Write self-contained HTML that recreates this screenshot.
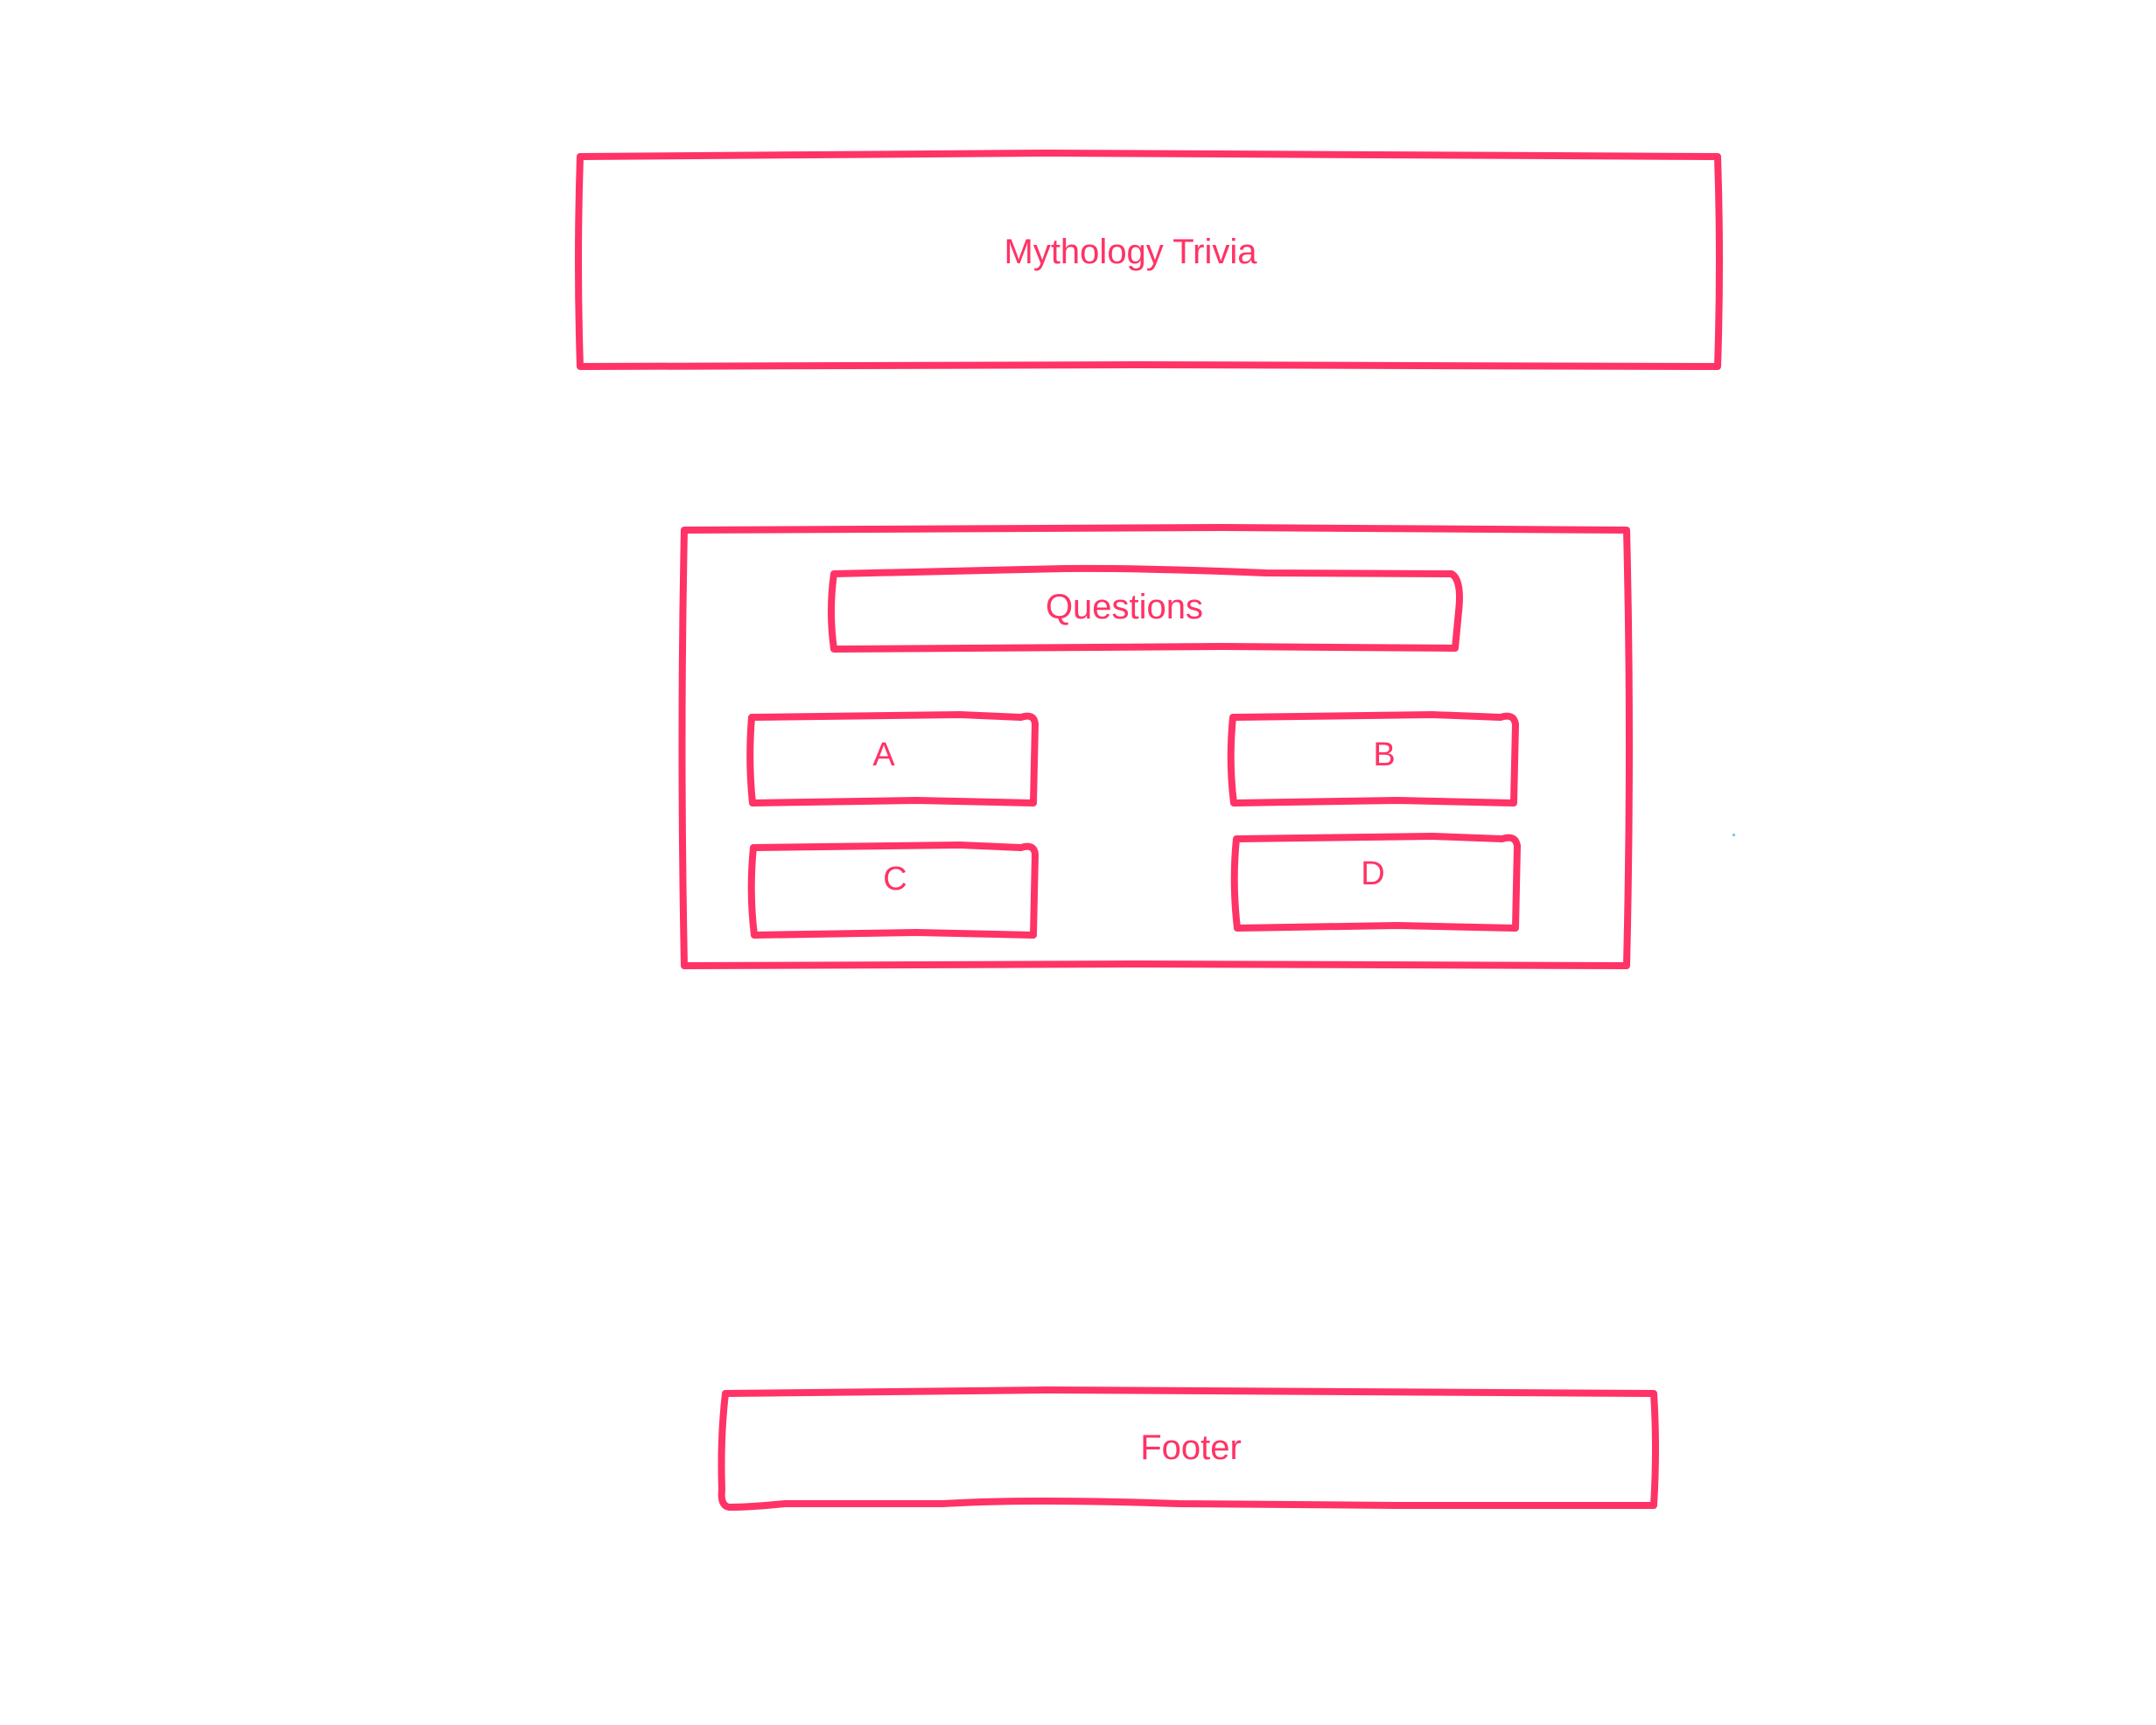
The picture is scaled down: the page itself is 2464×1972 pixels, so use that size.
<!DOCTYPE html>
<html><head><meta charset="utf-8"><style>
html,body{margin:0;padding:0;background:#fff;}
svg{display:block}
text{font-family:"Liberation Sans",sans-serif;fill:#ff3366;text-anchor:middle;}
</style></head><body>
<svg width="2464" height="1972" viewBox="0 0 2464 1972" xmlns="http://www.w3.org/2000/svg">
<g fill="none" stroke="#ff3366" stroke-width="8" stroke-linecap="round" stroke-linejoin="round" transform="translate(-3,-1)">
<path d="M666 180 L1200 176 L1966 180 Q1970 300 1966 420 L1300 418 L666 420 Q662 300 666 180 Z"/>
<path d="M785 607 L1400 604 L1862 607 Q1868 850 1862 1105 L1300 1103 L785 1105 Q780 850 785 607 Z"/>
<path d="M956 657 L1220 651 Q1300 650 1450 656 L1662 657 Q1674 664 1670 700 L1666 742 L1400 740 L956 743 Q950 700 956 657 Z"/>
<path d="M862 821 L1100 818 L1170 821 Q1185 816 1186 829 L1184 919 L1050 916 L863 919 Q858 871 862 821 Z"/>
<path d="M1412 821 L1640 818 L1718 821 Q1733 816 1735 829 L1733 919 L1600 916 L1413 919 Q1407 871 1412 821 Z"/>
<path d="M864 970 L1100 967 L1170 970 Q1185 965 1186 978 L1184 1070 L1050 1067 L865 1070 Q859 1020 864 970 Z"/>
<path d="M1416 960 L1640 957 L1720 960 Q1735 955 1737 968 L1735 1062 L1600 1059 L1417 1062 Q1411 1010 1416 960 Z"/>
<path d="M832 1594 L1200 1590 L1893 1594 Q1897 1656 1893 1722 L1600 1722 L1350 1720 Q1180 1714 1080 1720 L900 1720 Q860 1724 836 1724 Q826 1722 828 1704 Q826 1646 832 1594 Z"/>
</g>
<rect x="1980" y="953" width="3" height="3" fill="#88c8ea"/>
<text x="1292" y="301" font-size="40">Mythology Trivia</text>
<text x="1285" y="707" font-size="40">Questions</text>
<text x="1010" y="875" font-size="38">A</text>
<text x="1582" y="875" font-size="38">B</text>
<text x="1023" y="1017" font-size="38">C</text>
<text x="1569" y="1011" font-size="38">D</text>
<text x="1361" y="1668" font-size="40">Footer</text>
</svg>
</body></html>
